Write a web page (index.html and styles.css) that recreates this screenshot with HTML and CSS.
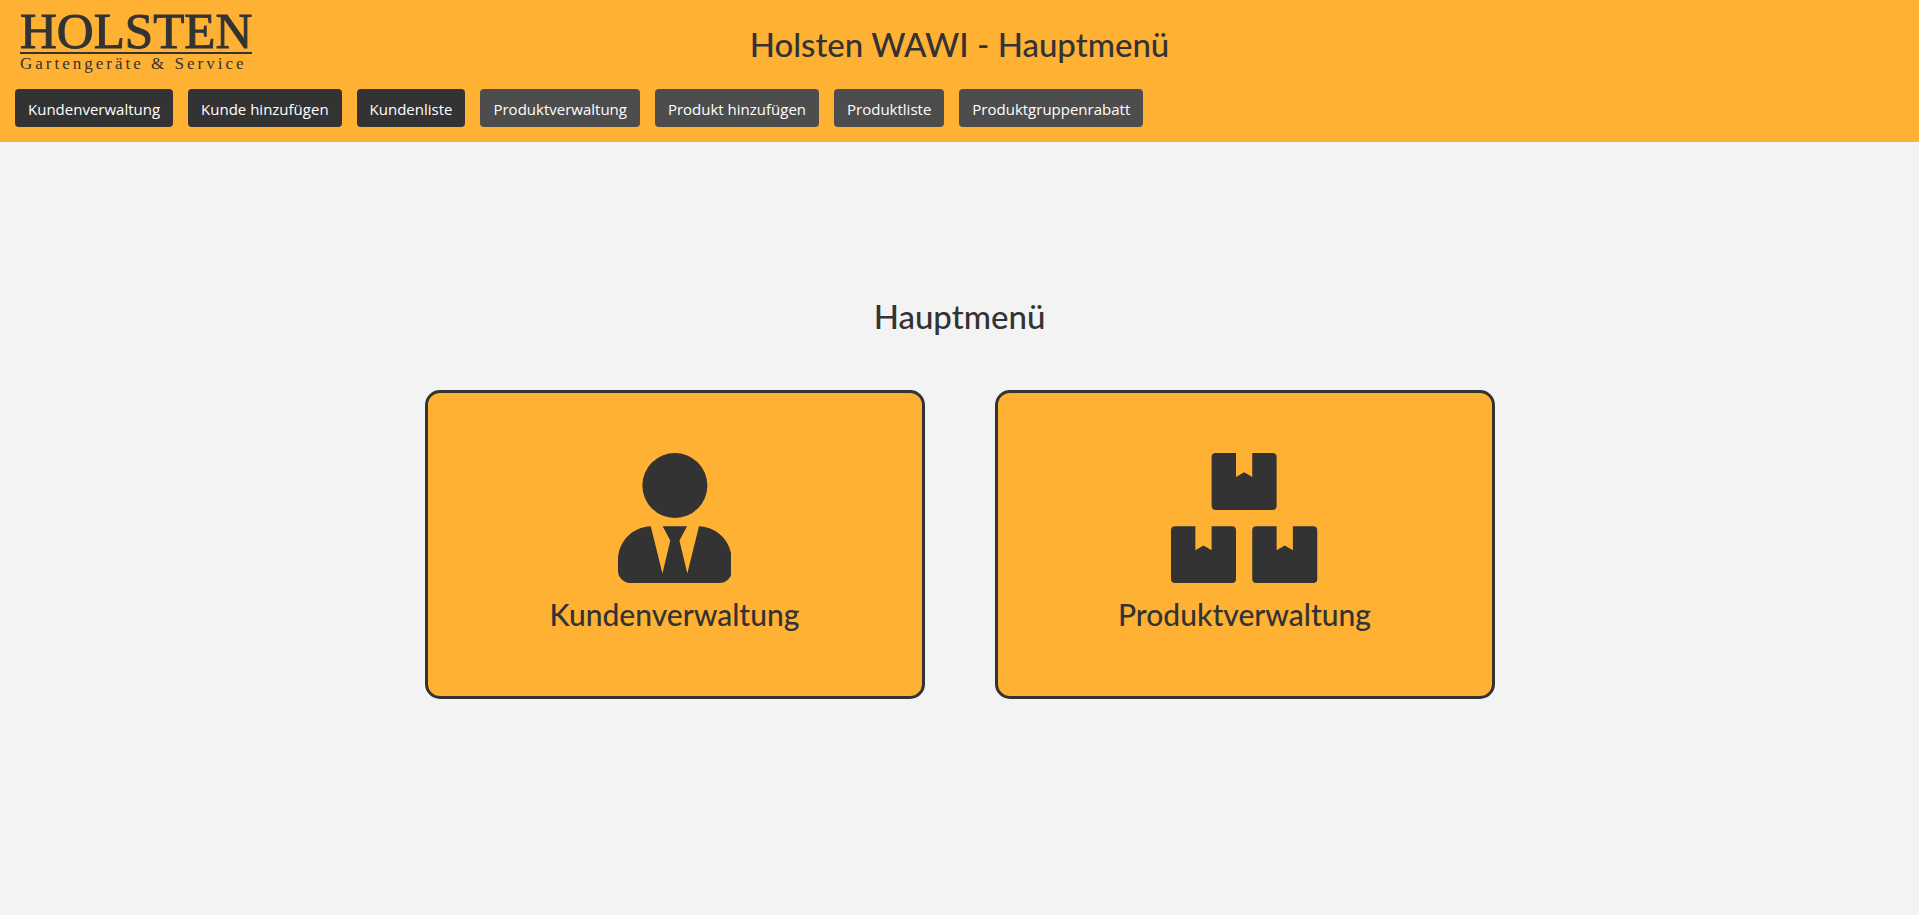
FILE: index.html
```
<!DOCTYPE html>
<html lang="de">
<head>
    <meta charset="UTF-8">
    <meta name="viewport" content="width=device-width, initial-scale=1.0">
    <title>Holsten WAWI - Hauptmenü</title>
    <link rel="stylesheet" href="styles.css">
</head>
<body>

    <header class="header">
        <div class="header-top">
            <a class="logo" href="#">
                <span class="logo-name">HOLSTEN</span>
                <span class="logo-sub">Gartengeräte &amp; Service</span>
            </a>
            <h1 class="title">Holsten WAWI - Hauptmenü</h1>
        </div>
        <nav class="nav">
            <button type="button" class="nav-btn">Kundenverwaltung</button>
            <button type="button" class="nav-btn">Kunde hinzufügen</button>
            <button type="button" class="nav-btn">Kundenliste</button>
            <button type="button" class="nav-btn product">Produktverwaltung</button>
            <button type="button" class="nav-btn product">Produkt hinzufügen</button>
            <button type="button" class="nav-btn product">Produktliste</button>
            <button type="button" class="nav-btn product">Produktgruppenrabatt</button>
        </nav>
    </header>

    <main class="main">
        <h2 class="title">Hauptmenü</h2>
        <div class="cards">
            <a class="card" href="#">
                <svg class="card-icon" viewBox="0 0 448 512" aria-hidden="true">
                    <circle cx="224" cy="128" r="128"/>
                    <path d="M129 288.500L175 475l31-130-30-57h96l-30 57 31 130 46-186.500C391 291 448 349 448 422v42c0 26.500-21.500 48-48 48H48c-26.500 0-48-21.500-48-48v-42C0 349 57 291 129 288.500z"/>
                </svg>
                <span class="card-label">Kundenverwaltung</span>
            </a>
            <a class="card" href="#">
                <svg class="card-icon" viewBox="0 0 576 512" aria-hidden="true">
                    <defs>
                        <path id="box" d="M16 0h80v95l32-19 32 19V0h80q16 0 16 16v192q0 16-16 16H16q-16 0-16-16V16Q0 0 16 0z"/>
                    </defs>
                    <use href="#box" x="160" y="0"/>
                    <use href="#box" x="0" y="288"/>
                    <use href="#box" x="320" y="288"/>
                </svg>
                <span class="card-label">Produktverwaltung</span>
            </a>
        </div>
    </main>

</body>
</html>
```
FILE: styles.css
```
* {
    box-sizing: border-box;
}
body {
    margin: 0;
    background-color: #f3f3f3;
    color: #333;
    font-family: "Open Sans", sans-serif;
}

/* Header */
.header {
    background-color: #ffb133;
    padding: 10px 15px 15px;
}
.header-top {
    display: grid;
    grid-template-columns: 1fr auto 1fr;
    align-items: end;
    margin-bottom: 15px;
}
.logo {
    justify-self: start;
    display: flex;
    flex-direction: column;
    margin-left: 5px;
    color: #333;
    font-family: "Liberation Serif", serif;
    text-decoration: none;
}
.logo-name {
    font-size: 51px;
    line-height: 42px;
    border-bottom: 2px solid #333;
    -webkit-text-stroke: 1px #333;
}
.logo-sub {
    font-size: 17px;
    line-height: 20px;
    letter-spacing: 3px;
}
.title {
    margin: 0;
    font-family: Lato, sans-serif;
    font-size: 33px;
    font-weight: 500;
    line-height: 40px;
}
.header .title {
    padding-bottom: 10px;
}
.nav {
    display: flex;
    flex-wrap: wrap;
    gap: 15px;
}
.nav-btn {
    padding: 9px 13px 7px;
    border: none;
    border-radius: 4px;
    background-color: #333;
    color: #fff;
    font-family: inherit;
    font-size: 15px;
    line-height: 22px;
    cursor: pointer;
}
.nav-btn.product {
    background-color: #4d4d4d;
}

/* Main menu */
.main {
    display: flex;
    flex-direction: column;
    align-items: center;
    gap: 54px;
    padding: 154px 20px 20px;
}
.cards {
    display: flex;
    flex-wrap: wrap;
    justify-content: center;
    gap: 70px;
}
.card {
    display: flex;
    flex-direction: column;
    align-items: center;
    gap: 10px;
    width: 500px;
    padding: 60px;
    border: 3px solid #333;
    border-radius: 15px;
    background-color: #ffb133;
    color: #333;
    text-decoration: none;
}
.card-icon {
    height: 130px;
    fill: currentColor;
}
.card-label {
    font-family: Lato, sans-serif;
    font-size: 30px;
    font-weight: 500;
    line-height: 43px;
}
```
